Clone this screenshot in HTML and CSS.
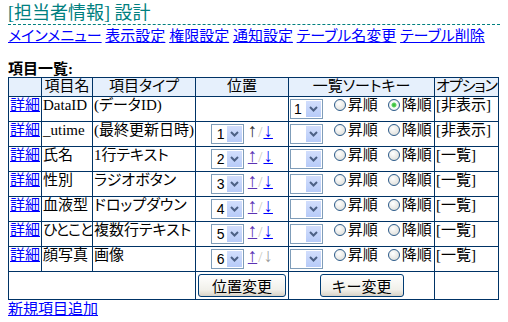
FILE: index.html
```html
<!DOCTYPE html>
<html lang="ja">
  <head>
    <meta charset="UTF-8" />
    <title>担当者情報 設計</title>
    <link rel="stylesheet" href="styles.css">
  </head>
  <body>
    <h1 class="title">[担当者情報] 設計</h1>
    <div class="menu">
      <a href="#">メインメニュー</a> <a href="#">表示設定</a> <a href="#">権限設定</a> <a href="#">通知設定</a> <a href="#">テーブル名変更</a> <a href="#">テーブル削除</a>
    </div>
    <p class="list-title">項目一覧:</p>
    <table class="items">
      <colgroup>
        <col class="c-detail" />
        <col class="c-name" />
        <col class="c-type" />
        <col class="c-pos" />
        <col class="c-sort" />
        <col class="c-opt" />
      </colgroup>
      <tr>
        <th></th>
        <th>項目名</th>
        <th>項目タイプ</th>
        <th>位置</th>
        <th>一覧ソートキー</th>
        <th class="left tight">オプション</th>
      </tr>
      <tr>
        <td><a href="#">詳細</a></td>
        <td>DataID</td>
        <td>(データID)</td>
        <td class="pos"></td>
        <td>
          <span class="sel"><span class="sel-val">1</span><span class="sel-btn"><svg width="9" height="6" viewBox="0 0 9 6"><path d="M1 1l3.5 3.5L8 1" stroke="#4d6185" stroke-width="2" fill="none"/></svg></span></span>
          <input type="radio" class="radio" name="s0" /><span class="lbl">昇順</span><input type="radio" class="radio" name="s0" checked /><span class="lbl">降順</span>
        </td>
        <td>[非表示]</td>
      </tr>
      <tr>
        <td><a href="#">詳細</a></td>
        <td>_utime</td>
        <td>(最終更新日時)</td>
        <td class="pos">
          <span class="sel"><span class="sel-val">1</span><span class="sel-btn"><svg width="9" height="6" viewBox="0 0 9 6"><path d="M1 1l3.5 3.5L8 1" stroke="#4d6185" stroke-width="2" fill="none"/></svg></span></span>
          <span class="arrow off-up">↑</span><span class="sep">/</span><a href="#" class="arrow down">↓</a>
        </td>
        <td>
          <span class="sel"><span class="sel-val"></span><span class="sel-btn"><svg width="9" height="6" viewBox="0 0 9 6"><path d="M1 1l3.5 3.5L8 1" stroke="#4d6185" stroke-width="2" fill="none"/></svg></span></span>
          <input type="radio" class="radio" name="s1" /><span class="lbl">昇順</span><input type="radio" class="radio" name="s1" /><span class="lbl">降順</span>
        </td>
        <td>[非表示]</td>
      </tr>
      <tr>
        <td><a href="#">詳細</a></td>
        <td>氏名</td>
        <td>1行テキスト</td>
        <td class="pos">
          <span class="sel"><span class="sel-val">2</span><span class="sel-btn"><svg width="9" height="6" viewBox="0 0 9 6"><path d="M1 1l3.5 3.5L8 1" stroke="#4d6185" stroke-width="2" fill="none"/></svg></span></span>
          <a href="#" class="arrow up">↑</a><span class="sep">/</span><a href="#" class="arrow down">↓</a>
        </td>
        <td>
          <span class="sel"><span class="sel-val"></span><span class="sel-btn"><svg width="9" height="6" viewBox="0 0 9 6"><path d="M1 1l3.5 3.5L8 1" stroke="#4d6185" stroke-width="2" fill="none"/></svg></span></span>
          <input type="radio" class="radio" name="s2" /><span class="lbl">昇順</span><input type="radio" class="radio" name="s2" /><span class="lbl">降順</span>
        </td>
        <td>[一覧]</td>
      </tr>
      <tr>
        <td><a href="#">詳細</a></td>
        <td>性別</td>
        <td>ラジオボタン</td>
        <td class="pos">
          <span class="sel"><span class="sel-val">3</span><span class="sel-btn"><svg width="9" height="6" viewBox="0 0 9 6"><path d="M1 1l3.5 3.5L8 1" stroke="#4d6185" stroke-width="2" fill="none"/></svg></span></span>
          <a href="#" class="arrow up">↑</a><span class="sep">/</span><a href="#" class="arrow down">↓</a>
        </td>
        <td>
          <span class="sel"><span class="sel-val"></span><span class="sel-btn"><svg width="9" height="6" viewBox="0 0 9 6"><path d="M1 1l3.5 3.5L8 1" stroke="#4d6185" stroke-width="2" fill="none"/></svg></span></span>
          <input type="radio" class="radio" name="s3" /><span class="lbl">昇順</span><input type="radio" class="radio" name="s3" /><span class="lbl">降順</span>
        </td>
        <td>[一覧]</td>
      </tr>
      <tr>
        <td><a href="#">詳細</a></td>
        <td>血液型</td>
        <td>ドロップダウン</td>
        <td class="pos">
          <span class="sel"><span class="sel-val">4</span><span class="sel-btn"><svg width="9" height="6" viewBox="0 0 9 6"><path d="M1 1l3.5 3.5L8 1" stroke="#4d6185" stroke-width="2" fill="none"/></svg></span></span>
          <a href="#" class="arrow up">↑</a><span class="sep">/</span><a href="#" class="arrow down">↓</a>
        </td>
        <td>
          <span class="sel"><span class="sel-val"></span><span class="sel-btn"><svg width="9" height="6" viewBox="0 0 9 6"><path d="M1 1l3.5 3.5L8 1" stroke="#4d6185" stroke-width="2" fill="none"/></svg></span></span>
          <input type="radio" class="radio" name="s4" /><span class="lbl">昇順</span><input type="radio" class="radio" name="s4" /><span class="lbl">降順</span>
        </td>
        <td>[一覧]</td>
      </tr>
      <tr>
        <td><a href="#">詳細</a></td>
        <td class="tight">ひとこと</td>
        <td>複数行テキスト</td>
        <td class="pos">
          <span class="sel"><span class="sel-val">5</span><span class="sel-btn"><svg width="9" height="6" viewBox="0 0 9 6"><path d="M1 1l3.5 3.5L8 1" stroke="#4d6185" stroke-width="2" fill="none"/></svg></span></span>
          <a href="#" class="arrow up">↑</a><span class="sep">/</span><a href="#" class="arrow down">↓</a>
        </td>
        <td>
          <span class="sel"><span class="sel-val"></span><span class="sel-btn"><svg width="9" height="6" viewBox="0 0 9 6"><path d="M1 1l3.5 3.5L8 1" stroke="#4d6185" stroke-width="2" fill="none"/></svg></span></span>
          <input type="radio" class="radio" name="s5" /><span class="lbl">昇順</span><input type="radio" class="radio" name="s5" /><span class="lbl">降順</span>
        </td>
        <td>[一覧]</td>
      </tr>
      <tr>
        <td><a href="#">詳細</a></td>
        <td>顔写真</td>
        <td>画像</td>
        <td class="pos">
          <span class="sel"><span class="sel-val">6</span><span class="sel-btn"><svg width="9" height="6" viewBox="0 0 9 6"><path d="M1 1l3.5 3.5L8 1" stroke="#4d6185" stroke-width="2" fill="none"/></svg></span></span>
          <a href="#" class="arrow up">↑</a><span class="sep">/</span><span class="arrow off-down">↓</span>
        </td>
        <td>
          <span class="sel"><span class="sel-val"></span><span class="sel-btn"><svg width="9" height="6" viewBox="0 0 9 6"><path d="M1 1l3.5 3.5L8 1" stroke="#4d6185" stroke-width="2" fill="none"/></svg></span></span>
          <input type="radio" class="radio" name="s6" /><span class="lbl">昇順</span><input type="radio" class="radio" name="s6" /><span class="lbl">降順</span>
        </td>
        <td>[一覧]</td>
      </tr>
      <tr class="actions">
        <td colspan="3"></td>
        <td class="center"><button type="button" class="btn btn-pos">位置変更</button></td>
        <td class="center"><button type="button" class="btn btn-key">キー変更</button></td>
        <td></td>
      </tr>
    </table>
    <a href="#" class="add">新規項目追加</a>
  </body>
</html>
```

FILE: styles.css
```css
body {
  margin: 0 8px;
  background-color: white;
  color: black;
  font-family: "Liberation Serif", "Noto Sans CJK JP", serif;
  font-size: 15px;
  line-height: 17px;
  font-feature-settings: "palt";
}

a {
  color: #0000ff;
}

.title {
  margin: 2px 0 0;
  color: #008080;
  font-size: 18px;
  font-weight: normal;
  line-height: 22px;
  border-bottom: 1px dashed #008080;
}

.menu {
  margin-top: 3px;
}

.list-title {
  margin: 17px 0 0;
  font-weight: bold;
  line-height: 15px;
}

.items {
  border-collapse: collapse;
  table-layout: fixed;
  width: 490px;
}

.c-detail { width: 33px; }
.c-name { width: 51px; }
.c-type { width: 103px; }
.c-pos { width: 93px; }
.c-sort { width: 146px; }
.c-opt { width: 64px; }

.items th,
.items td {
  border: 1px solid #003366;
  padding: 0 1px;
  vertical-align: top;
  text-align: left;
  white-space: nowrap;
  overflow: hidden;
}

.items th {
  height: 18px;
  background-color: #e6f0fc;
  font-weight: normal;
  text-align: center;
}

.items th.left {
  text-align: left;
}

.items .tight {
  letter-spacing: -1px;
}

.items td {
  height: 24px;
}

.items .pos,
.items .center {
  text-align: center;
}

.actions td {
  height: 27px;
}

.sel {
  display: inline-flex;
  box-sizing: border-box;
  width: 33px;
  height: 20px;
  margin-top: 2px;
  border: 1px solid #7f9db9;
  background-color: white;
  vertical-align: top;
}

.sel-val {
  flex: 1;
  padding-left: 3px;
  font-family: "Liberation Sans", sans-serif;
  font-size: 14px;
  line-height: 18px;
}

.sel-btn {
  display: flex;
  align-items: center;
  justify-content: center;
  width: 15px;
  margin: 1px;
  background: linear-gradient(#d2defc, #b7cbf8);
}

.arrow {
  font-family: "Liberation Serif", serif;
  font-size: 19px;
  line-height: 17px;
}

.up {
  color: #5a32b4;
}

.off-up {
  color: #333333;
}

.off-down {
  color: #a0a0a0;
}

.sep {
  margin: 0 1px;
  color: #c8c8c0;
}

.radio {
  appearance: none;
  box-sizing: border-box;
  width: 12px;
  height: 12px;
  margin: 0 2px 0 7px;
  border: 1px solid #2c5b8a;
  border-radius: 50%;
  background: radial-gradient(circle at 40% 35%, #ffffff, #d8d8d2);
  vertical-align: -1px;
}

.radio + .lbl + .radio {
  margin-left: 10px;
}

.radio:checked {
  background: radial-gradient(circle, #2fb52f 0, #5fd35f 2px, #ffffff 3px, #d8d8d2 100%);
}

.btn {
  box-sizing: border-box;
  height: 23px;
  margin-top: 2px;
  padding: 0;
  border: 1px solid #003c74;
  border-radius: 3px;
  background: linear-gradient(#ffffff, #f1f0ea 70%, #d8d2c6);
  font-family: "Noto Sans CJK JP", sans-serif;
  font-size: 15px;
  line-height: 19px;
  color: black;
}

.btn-pos {
  width: 88px;
}

.btn-key {
  width: 84px;
}

.add {
  display: inline-block;
  margin-top: 1px;
}
```
